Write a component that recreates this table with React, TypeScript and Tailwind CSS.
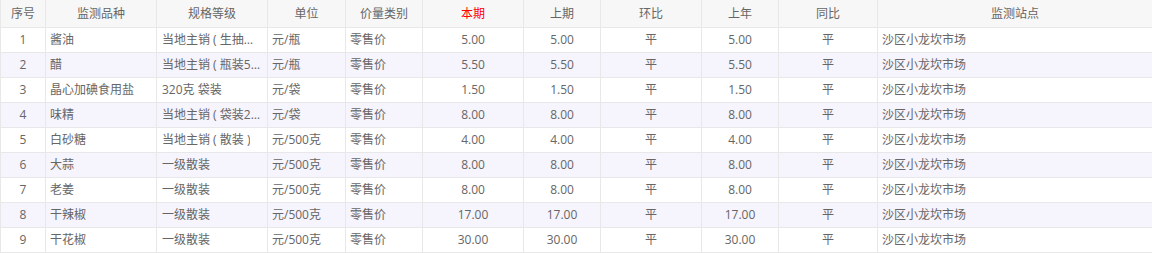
import React from "react";

type Row = {
  no: number
  name: string
  spec: string
  unit: string
  priceType: string
  cur: string
  prev: string
  mom: string
  lastYear: string
  yoy: string
  site: string
}

const ROWS: Row[] = [
  { no: 1, name: "酱油", spec: "当地主销（生抽瓶装500ml）", unit: "元/瓶", priceType: "零售价", cur: "5.00", prev: "5.00", mom: "平", lastYear: "5.00", yoy: "平", site: "沙区小龙坎市场" },
  { no: 2, name: "醋", spec: "当地主销（瓶装500ml）", unit: "元/瓶", priceType: "零售价", cur: "5.50", prev: "5.50", mom: "平", lastYear: "5.50", yoy: "平", site: "沙区小龙坎市场" },
  { no: 3, name: "晶心加碘食用盐", spec: "320克 袋装", unit: "元/袋", priceType: "零售价", cur: "1.50", prev: "1.50", mom: "平", lastYear: "1.50", yoy: "平", site: "沙区小龙坎市场" },
  { no: 4, name: "味精", spec: "当地主销（袋装200克）", unit: "元/袋", priceType: "零售价", cur: "8.00", prev: "8.00", mom: "平", lastYear: "8.00", yoy: "平", site: "沙区小龙坎市场" },
  { no: 5, name: "白砂糖", spec: "当地主销（散装）", unit: "元/500克", priceType: "零售价", cur: "4.00", prev: "4.00", mom: "平", lastYear: "4.00", yoy: "平", site: "沙区小龙坎市场" },
  { no: 6, name: "大蒜", spec: "一级散装", unit: "元/500克", priceType: "零售价", cur: "8.00", prev: "8.00", mom: "平", lastYear: "8.00", yoy: "平", site: "沙区小龙坎市场" },
  { no: 7, name: "老姜", spec: "一级散装", unit: "元/500克", priceType: "零售价", cur: "8.00", prev: "8.00", mom: "平", lastYear: "8.00", yoy: "平", site: "沙区小龙坎市场" },
  { no: 8, name: "干辣椒", spec: "一级散装", unit: "元/500克", priceType: "零售价", cur: "17.00", prev: "17.00", mom: "平", lastYear: "17.00", yoy: "平", site: "沙区小龙坎市场" },
  { no: 9, name: "干花椒", spec: "一级散装", unit: "元/500克", priceType: "零售价", cur: "30.00", prev: "30.00", mom: "平", lastYear: "30.00", yoy: "平", site: "沙区小龙坎市场" },
]

// full-width brackets sit centred in the original font, fake it with spaced ascii ones
function formatSpec(s: string) {
  return s.replace(/（/g, " ( ").replace(/）/g, " )")
}

const cell = "flex items-center border-r border-[#e8e8e8] overflow-hidden"
const left = "px-[4px]"

export default function App() {
  return (
    <div
      className="w-[1152px] h-[253px] bg-white text-[12px] text-[#666] border-l border-[#e8e8e8] overflow-hidden"
      style={{ fontFamily: '"Open Sans", "Noto Sans CJK SC", sans-serif' }}
    >
      {/* header */}
      <div className="flex h-[28px] bg-[#f7f7f7] border-b border-[#e8e8e8]">
        <div className={`${cell} w-[45px] justify-center`}>序号</div>
        <div className={`${cell} w-[111px] justify-center`}>监测品种</div>
        <div className={`${cell} w-[111px] justify-center`}>规格等级</div>
        <div className={`${cell} w-[78px] justify-center`}>单位</div>
        <div className={`${cell} w-[77px] justify-center`}>价量类别</div>
        <div className={`${cell} w-[101px] justify-center text-[#ff0000]`}>本期</div>
        <div className={`${cell} w-[77px] justify-center`}>上期</div>
        <div className={`${cell} w-[101px] justify-center`}>环比</div>
        <div className={`${cell} w-[77px] justify-center`}>上年</div>
        <div className={`${cell} w-[99px] justify-center`}>同比</div>
        <div className="flex items-center justify-center flex-1">监测站点</div>
      </div>

      {ROWS.map((r, i) => (
        <div
          key={r.no}
          className={`flex h-[25px] border-b border-[#e8e8e8] ${i % 2 === 1 ? 'bg-[#f6f4fd]' : 'bg-white'}`}
        >
          <div className={`${cell} w-[45px] justify-center`}>{r.no}</div>
          <div className={`${cell} w-[111px] ${left}`}>{r.name}</div>
          <div className={`${cell} w-[111px] pl-[5px] pr-[2px]`}>
            <span className="truncate whitespace-pre">{formatSpec(r.spec)}</span>
          </div>
          <div className={`${cell} w-[78px] ${left}`}>{r.unit}</div>
          <div className={`${cell} w-[77px] ${left}`}>{r.priceType}</div>
          <div className={`${cell} w-[101px] justify-center`}>{r.cur}</div>
          <div className={`${cell} w-[77px] justify-center`}>{r.prev}</div>
          <div className={`${cell} w-[101px] justify-center`}>{r.mom}</div>
          <div className={`${cell} w-[77px] justify-center`}>{r.lastYear}</div>
          <div className={`${cell} w-[99px] justify-center`}>{r.yoy}</div>
          <div className="flex items-center flex-1 px-[4px]">{r.site}</div>
        </div>
      ))}
    </div>
  )
}
